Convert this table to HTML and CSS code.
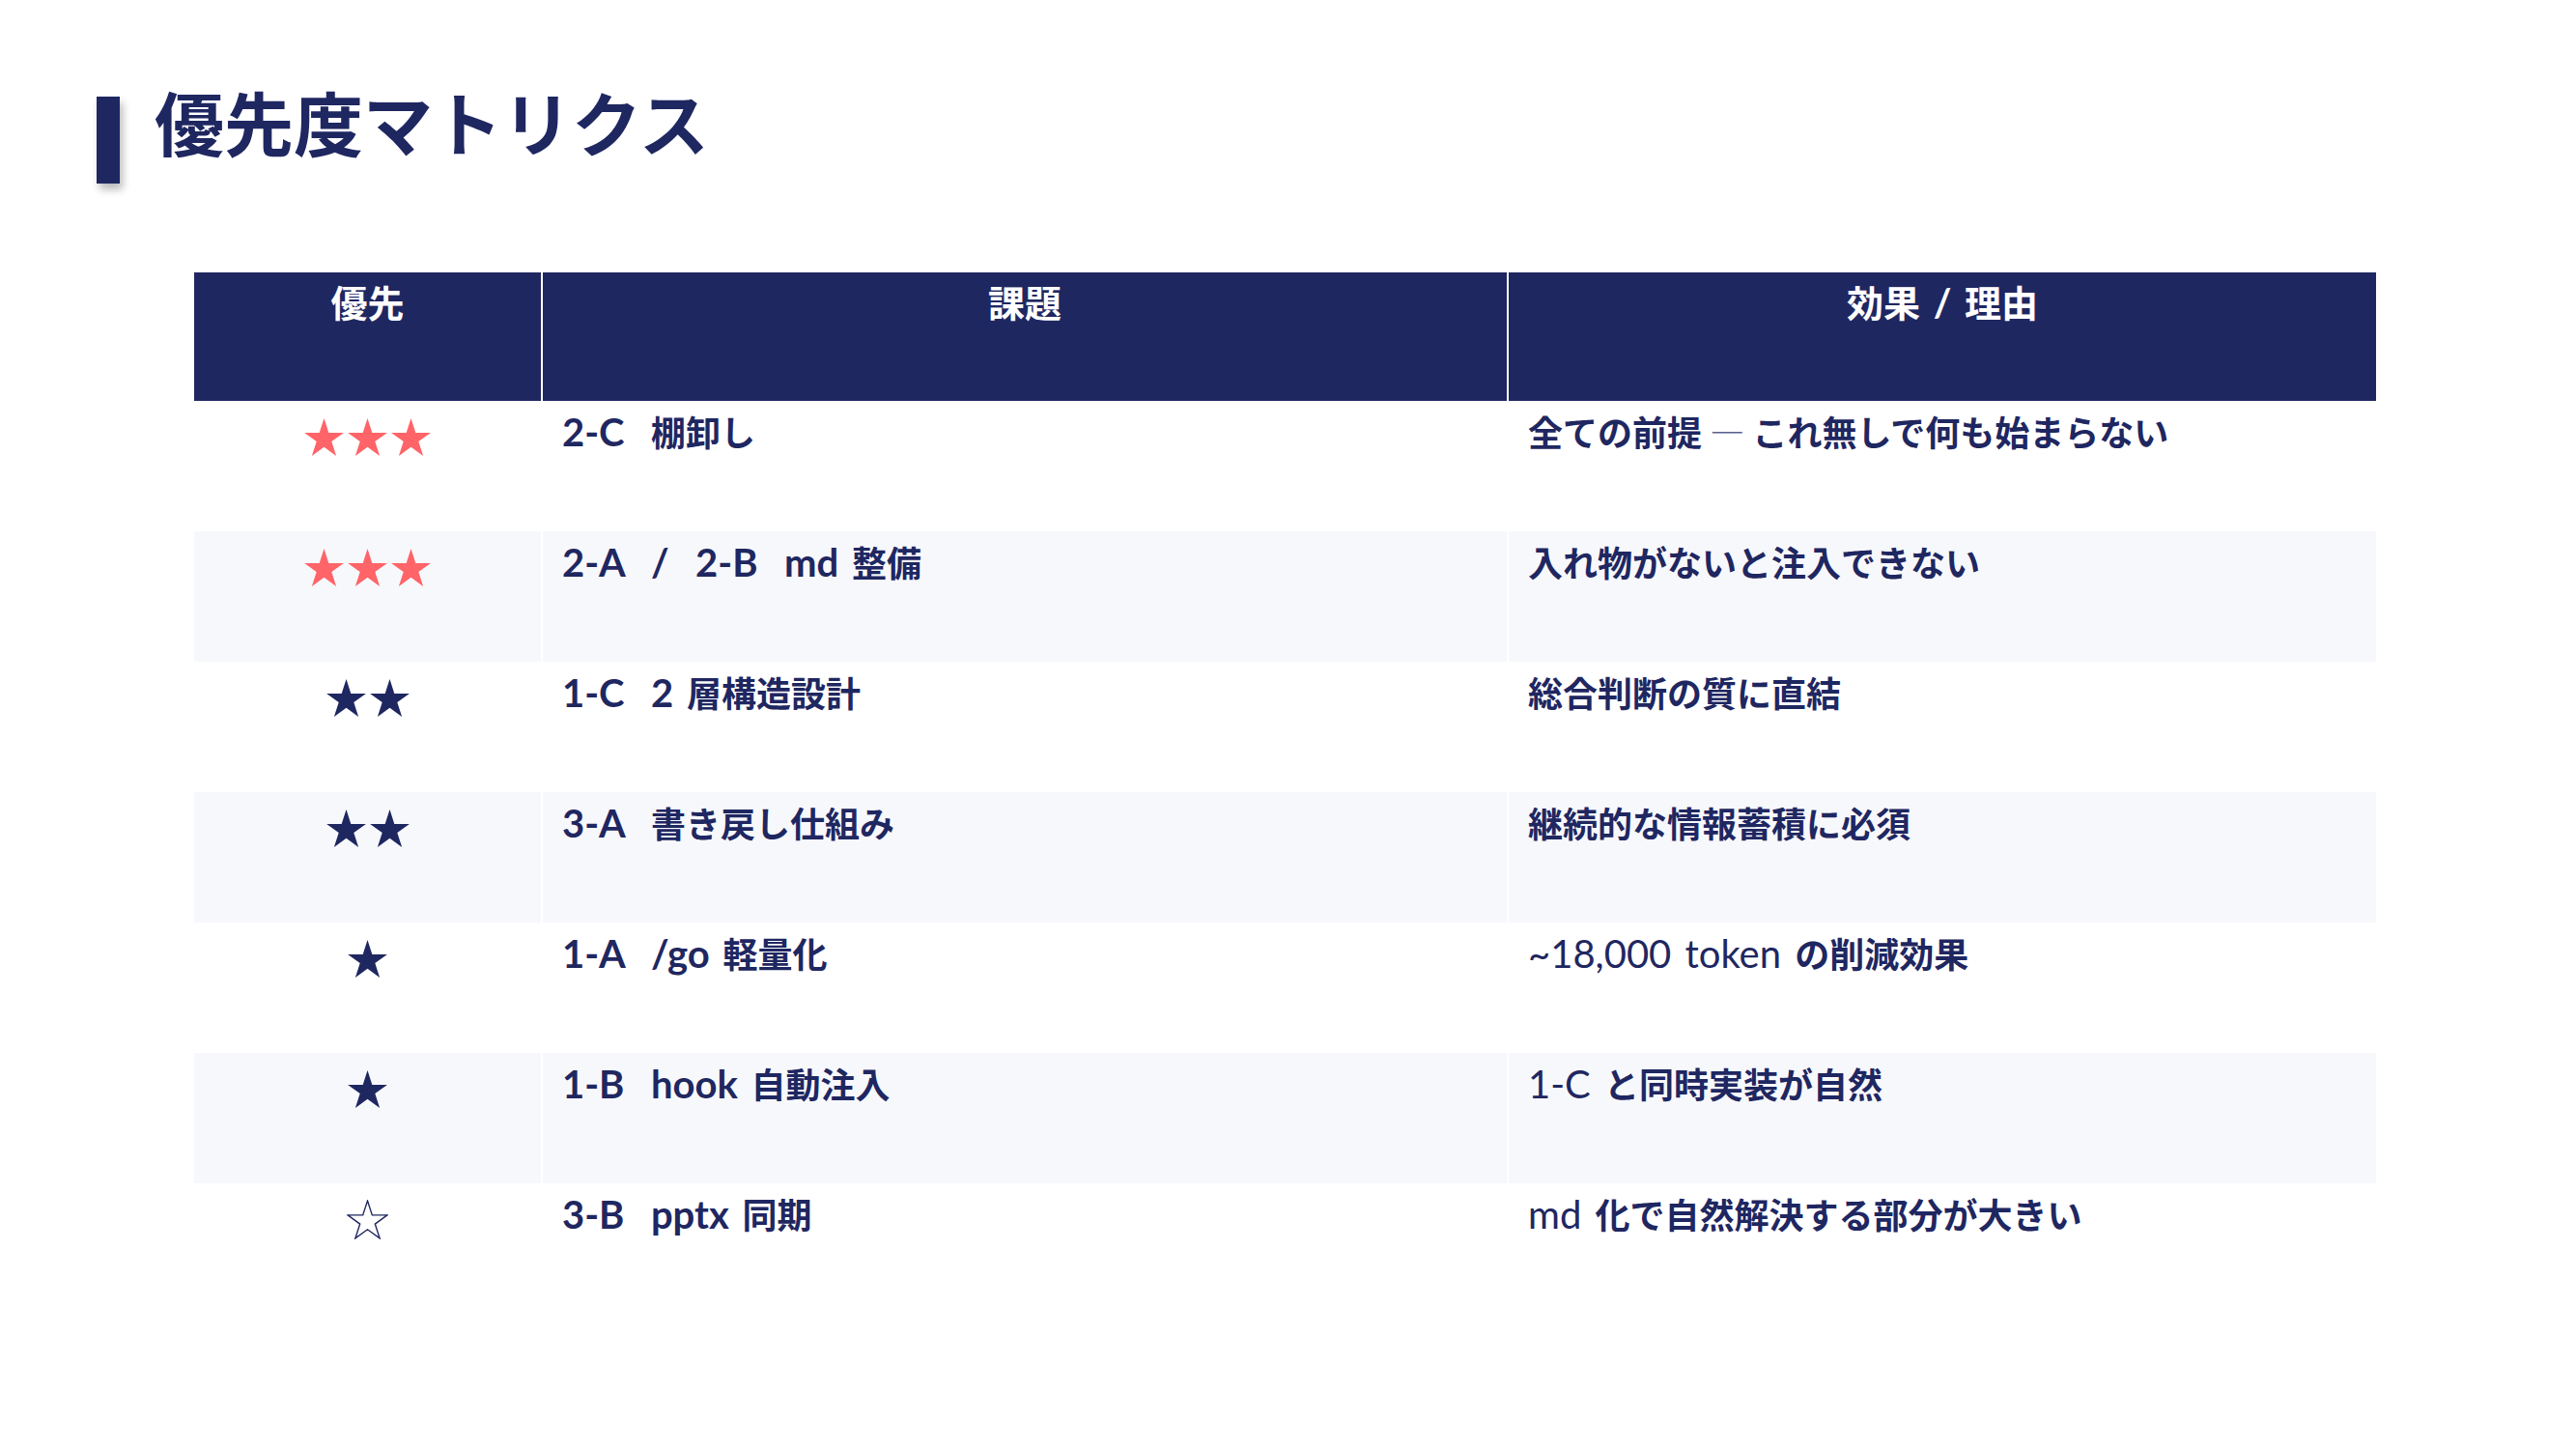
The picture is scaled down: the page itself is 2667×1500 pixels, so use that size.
FILE: index.html
```html
<!DOCTYPE html>
<html lang="ja">
<head>
<meta charset="utf-8">
<title>優先度マトリクス</title>
<link rel="stylesheet" href="styles.css">
</head>
<body>
<svg class="defs" width="0" height="0" aria-hidden="true">
  <defs>
    <polygon id="star" points="0,-20 4.49,-6.18 19.02,-6.18 7.27,2.36 11.76,16.18 0,7.64 -11.76,16.18 -7.27,2.36 -19.02,-6.18 -4.49,-6.18"/>
  </defs>
</svg>
<div class="slide">
  <header class="title-row">
    <div class="title-bar"></div>
    <h1 class="title">優先度マトリクス</h1>
  </header>
  <table class="matrix">
    <colgroup>
      <col class="c-pri">
      <col class="c-task">
      <col class="c-eff">
    </colgroup>
    <thead>
      <tr>
        <th>優先</th>
        <th>課題</th>
        <th>効果<span class="en"> / </span>理由</th>
      </tr>
    </thead>
    <tbody>
      <tr>
        <td class="pri"><div class="stars hot"><svg class="star" viewBox="-20 -21 40 38.2"><use href="#star"/></svg><svg class="star" viewBox="-20 -21 40 38.2"><use href="#star"/></svg><svg class="star" viewBox="-20 -21 40 38.2"><use href="#star"/></svg></div></td>
        <td class="task"><span class="en">2-C&nbsp;&nbsp;</span>棚卸し</td>
        <td class="eff">全ての前提 <span class="dash">—</span> これ無しで何も始まらない</td>
      </tr>
      <tr class="alt">
        <td class="pri"><div class="stars hot"><svg class="star" viewBox="-20 -21 40 38.2"><use href="#star"/></svg><svg class="star" viewBox="-20 -21 40 38.2"><use href="#star"/></svg><svg class="star" viewBox="-20 -21 40 38.2"><use href="#star"/></svg></div></td>
        <td class="task"><span class="en">2-A&nbsp;&nbsp;/&nbsp;&nbsp;2-B&nbsp;&nbsp;md </span>整備</td>
        <td class="eff">入れ物がないと注入できない</td>
      </tr>
      <tr>
        <td class="pri"><div class="stars"><svg class="star" viewBox="-20 -21 40 38.2"><use href="#star"/></svg><svg class="star" viewBox="-20 -21 40 38.2"><use href="#star"/></svg></div></td>
        <td class="task"><span class="en">1-C&nbsp;&nbsp;2 </span>層構造設計</td>
        <td class="eff">総合判断の質に直結</td>
      </tr>
      <tr class="alt">
        <td class="pri"><div class="stars"><svg class="star" viewBox="-20 -21 40 38.2"><use href="#star"/></svg><svg class="star" viewBox="-20 -21 40 38.2"><use href="#star"/></svg></div></td>
        <td class="task"><span class="en">3-A&nbsp;&nbsp;</span>書き戻し仕組み</td>
        <td class="eff">継続的な情報蓄積に必須</td>
      </tr>
      <tr>
        <td class="pri"><div class="stars"><svg class="star" viewBox="-20 -21 40 38.2"><use href="#star"/></svg></div></td>
        <td class="task"><span class="en">1-A&nbsp;&nbsp;/go </span>軽量化</td>
        <td class="eff"><span class="en lt">~18,000 token </span>の削減効果</td>
      </tr>
      <tr class="alt">
        <td class="pri"><div class="stars"><svg class="star" viewBox="-20 -21 40 38.2"><use href="#star"/></svg></div></td>
        <td class="task"><span class="en">1-B&nbsp;&nbsp;hook </span>自動注入</td>
        <td class="eff"><span class="en lt">1-C </span>と同時実装が自然</td>
      </tr>
      <tr>
        <td class="pri"><div class="stars empty"><svg class="star" viewBox="-20 -21 40 38.2"><use href="#star"/></svg></div></td>
        <td class="task"><span class="en">3-B&nbsp;&nbsp;pptx </span>同期</td>
        <td class="eff"><span class="en lt">md </span>化で自然解決する部分が大きい</td>
      </tr>
    </tbody>
  </table>
</div>
</body>
</html>
```
FILE: styles.css
```css
html, body {
  margin: 0;
  padding: 0;
  background: #ffffff;
}

body {
  font-family: "Noto Sans CJK JP", sans-serif;
  color: #1f2761;
}

.defs {
  position: absolute;
  width: 0;
  height: 0;
  overflow: hidden;
}

.slide {
  width: 2667px;
  height: 1500px;
  box-sizing: border-box;
  padding: 89px 0 0 100px;
}

.title-row {
  display: flex;
  align-items: flex-start;
  gap: 36px;
}

.title-bar {
  width: 24px;
  height: 90px;
  margin-top: 11px;
  background: #1f2761;
  box-shadow: 3px 6px 8px rgba(0, 0, 0, 0.28);
}

.title {
  margin: 0;
  font-family: "Noto Sans CJK JP", sans-serif;
  font-weight: 700;
  font-size: 72px;
  line-height: 1;
  color: #1f2761;
}

.matrix {
  margin: 92px 0 0 101px;
  width: 2259px;
  table-layout: fixed;
  border-collapse: separate;
  border-spacing: 0;
}

.c-pri { width: 359px; }
.c-task { width: 1000px; }
.c-eff { width: 900px; }

.matrix th,
.matrix td {
  vertical-align: top;
  padding: 0 20px;
}

.matrix th + th,
.matrix td + td {
  border-left: 2px solid #ffffff;
}

.matrix thead tr {
  height: 133px;
}

.matrix th {
  background: #1f2761;
  color: #ffffff;
  font-family: "Noto Sans CJK JP", sans-serif;
  font-weight: 700;
  font-size: 38px;
  line-height: 46px;
  padding-top: 7px;
  text-align: center;
}

.matrix th .en {
  font-family: "Lato", sans-serif;
  font-size: 40px;
  word-spacing: 4px;
}

.matrix tbody tr {
  height: 135px;
}

.matrix tbody tr.alt td {
  background: #f7f8fc;
}

.matrix td {
  font-size: 36px;
  line-height: 44px;
  font-weight: 700;
  padding-top: 9px;
  color: #1f2761;
}

.matrix td .en {
  font-family: "Lato", sans-serif;
  font-size: 40px;
  word-spacing: 4px;
}

.matrix td .lt {
  font-weight: 400;
}

.dash {
  font-weight: 300;
  color: #5a6090;
}

.matrix td.pri {
  padding-top: 17px;
  line-height: 0;
}

.stars {
  display: flex;
  justify-content: center;
  gap: 2px;
  fill: #1f2761;
}

.star {
  width: 43px;
  height: 41px;
  display: block;
}

.stars.hot {
  fill: #ff6468;
}

.stars.empty {
  fill: none;
  stroke: #1f2761;
  stroke-width: 1.3;
  stroke-linejoin: miter;
}
```
